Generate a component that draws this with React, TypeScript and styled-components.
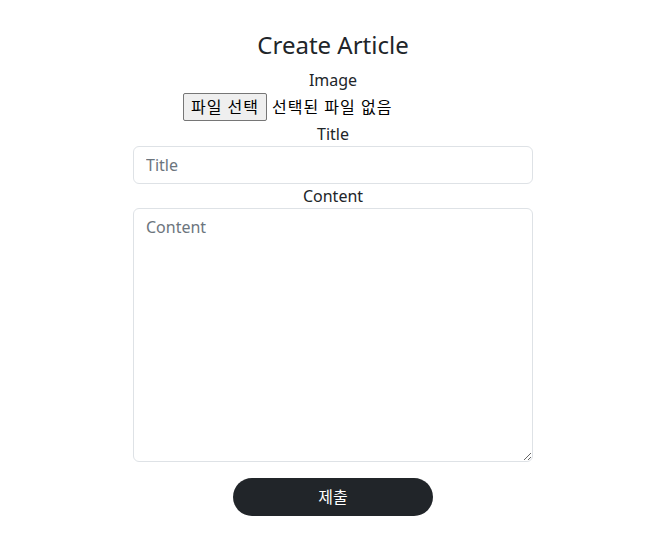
import React, { FC, useState } from "react";
import styled, { createGlobalStyle } from "styled-components";

const GlobalStyle = createGlobalStyle`
  * {
    box-sizing: border-box;
  }

  body {
    margin: 0;
    background: #fff;
    color: #212529;
    font-family: "Noto Sans", "Noto Sans CJK KR", sans-serif;
    font-size: 16px;
    line-height: 1.5;
  }
`;

const App: FC = () => {
  const [title, setTitle] = useState("");
  const [content, setContent] = useState("");
  const [fileName, setFileName] = useState("");

  return (
    <>
      <GlobalStyle />
      <Page>
        <Heading>Create Article</Heading>
        <Form onSubmit={(e) => e.preventDefault()}>
          <Label htmlFor="image">Image</Label>
          <FileRow>
            <FileButton htmlFor="image">파일 선택</FileButton>
            <FileName>{fileName || "선택된 파일 없음"}</FileName>
            <HiddenInput
              id="image"
              type="file"
              onChange={(e) => setFileName(e.target.files?.[0]?.name ?? "")}
            />
          </FileRow>

          <Label htmlFor="title">Title</Label>
          <Input
            id="title"
            placeholder="Title"
            value={title}
            onChange={(e) => setTitle(e.target.value)}
          />

          <Label htmlFor="content">Content</Label>
          <TextArea
            id="content"
            placeholder="Content"
            value={content}
            onChange={(e) => setContent(e.target.value)}
          />

          <Submit type="submit">제출</Submit>
        </Form>
      </Page>
    </>
  );
};

export default App;

const Page = styled.div`
  display: flex;
  flex-direction: column;
  align-items: center;
  padding: 31px 0 0 10px;
`;

const Heading = styled.h3`
  margin: 0 0 8px;
  font-size: 24px;
  font-weight: 400;
  line-height: 1.2;
`;

const Form = styled.form`
  width: 400px;
  display: flex;
  flex-direction: column;
  align-items: center;
`;

const Label = styled.label`
  display: block;
  text-align: center;
  line-height: 24px;
`;

const FileRow = styled.div`
  width: 300px;
  height: 30px;
  display: flex;
  align-items: center;
  gap: 5px;
  white-space: nowrap;
  letter-spacing: 1px;
`;

const FileButton = styled.label`
  height: 28px;
  padding: 0 7px;
  display: flex;
  align-items: center;
  background: #efefef;
  border: 1px solid #767676;
  border-radius: 2px;
  color: #000;
  cursor: pointer;
`;

const FileName = styled.span`
  color: #000;
`;

const HiddenInput = styled.input`
  display: none;
`;

const fieldStyles = `
  width: 100%;
  padding: 6px 12px;
  font: inherit;
  color: #212529;
  background: #fff;
  border: 1px solid #dee2e6;
  border-radius: 6px;
  outline: none;

  &::placeholder {
    color: #6c757d;
  }
`;

const Input = styled.input`
  ${fieldStyles}
  height: 38px;
`;

const TextArea = styled.textarea`
  ${fieldStyles}
  height: 254px;
  resize: vertical;
  display: block;
`;

const Submit = styled.button`
  margin-top: 16px;
  width: 200px;
  height: 38px;
  border: none;
  border-radius: 19px;
  background: #212529;
  color: #fff;
  font: inherit;
  cursor: pointer;
`;
